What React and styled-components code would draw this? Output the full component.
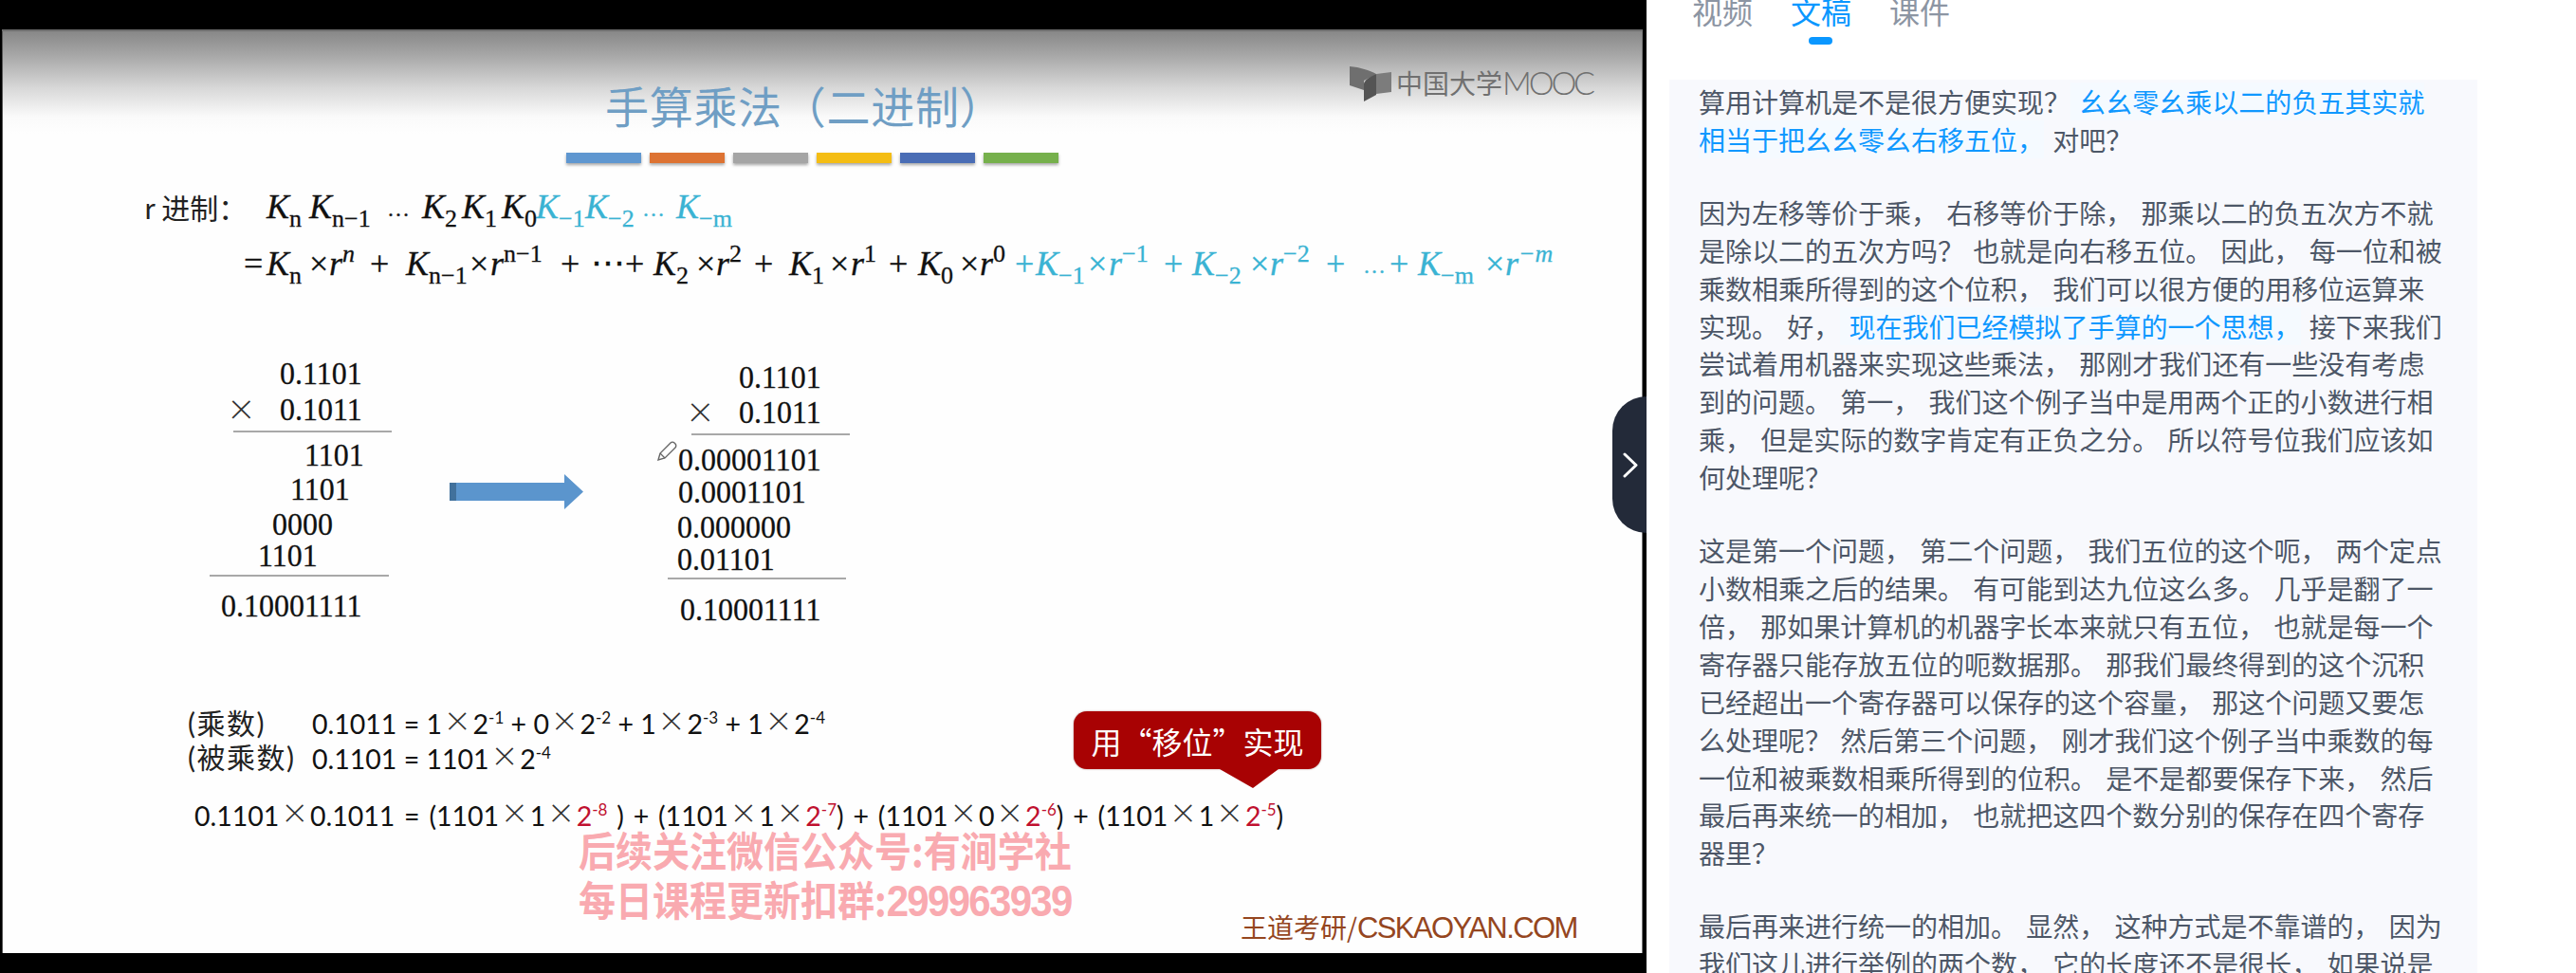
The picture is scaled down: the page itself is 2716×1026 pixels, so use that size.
import React from 'react';
import styled, { createGlobalStyle } from 'styled-components';

const Global = createGlobalStyle`
  html, body { margin: 0; padding: 0; background: #fff; }
  #root { width: 2716px; height: 1026px; overflow: hidden; }
`;

const SANS = `"Noto Sans CJK SC", "Liberation Sans", sans-serif`;

const Page = styled.div`
  display: flex;
  width: 2716px;
  height: 1026px;
  overflow: hidden;
  background: #fff;
`;

const VideoPane = styled.div`
  position: relative;
  flex: 0 0 1736px;
  height: 1026px;
  box-sizing: border-box;
  padding: 31px 4px 21px 2px;
  background: #000;
`;

const Slide = styled.div`
  position: relative;
  width: 100%;
  height: 100%;
  overflow: hidden;
  background: linear-gradient(#858585 0, #a8a8a8 28px, #d8d8d8 62px, #fafafa 92px, #fefefe 110px);
  box-shadow: inset 0 2px 0 #6e6e6e, inset 1px 0 0 #555, inset -1px 0 0 #777;
`;

const placed = (p) => `left:${p.$x - 2}px; top:${p.$y - 31}px;`;

const Title = styled.div`
  position: absolute;
  ${placed}
  font: 46px/50px ${SANS};
  letter-spacing: 0.7px;
  color: #6f9ec4;
  white-space: nowrap;
`;

const ColorBars = styled.div`
  position: absolute;
  ${placed}
  display: flex;
  gap: 9px;
`;

const ColorBar = styled.div`
  width: 79px;
  height: 11px;
  background: ${(p) => p.$c};
  box-shadow: 0 2px 3px rgba(0, 0, 0, 0.35);
`;

const LogoMark = styled.div`
  position: absolute;
  ${placed}
  display: flex;
  align-items: center;
  color: #707070;
  font: 28px/40px ${SANS};
  white-space: nowrap;
`;

const LogoLatin = styled.span`
  font: 300 34px/40px "Lato", "Liberation Sans", sans-serif;
  letter-spacing: -3.2px;
`;

const RadixLabel = styled.div`
  position: absolute;
  ${placed}
  font: 30px/40px ${SANS};
  color: #222;
  white-space: nowrap;
`;

const FormulaRow = styled.div`
  position: absolute;
  ${placed}
  display: flex;
  height: 50px;
  align-items: center;
  font: 36px/50px "Liberation Serif", serif;
  color: ${(p) => p.$c || '#111'};
  white-space: nowrap;
  -webkit-text-stroke: 0.3px currentColor;
`;

const Term = styled.span`
  flex: 0 0 ${(p) => p.$w}px;
  width: ${(p) => p.$w}px;
  color: ${(p) => p.$c || 'inherit'};
`;

const Var = styled.i`
  font-style: italic;
`;

const MathSub = styled.span`
  font-size: 26px;
  line-height: 0;
  position: relative;
  top: 9px;
  font-style: ${(p) => (p.$it ? 'italic' : 'normal')};
`;

const MathSup = styled.span`
  font-size: 26px;
  line-height: 0;
  position: relative;
  top: -14px;
  font-style: ${(p) => (p.$it ? 'italic' : 'normal')};
`;

const Dots = styled.span`
  font-size: 24px;
  letter-spacing: -1px;
`;

const Digits = styled.div`
  position: absolute;
  ${placed}
  font: 32px/40px "Liberation Serif", serif;
  color: #111;
  white-space: nowrap;
  transform-origin: left center;
  transform: scaleY(1.08);
  -webkit-text-stroke: 0.25px currentColor;
`;

const Cross = styled.div`
  position: absolute;
  ${placed}
  font: 300 46px/40px "Lato", "Liberation Sans", sans-serif;
  color: #333;
`;

const Rule = styled.div`
  position: absolute;
  ${placed}
  width: ${(p) => p.$w}px;
  height: 2px;
  background: #a8a8a8;
`;

const Drawing = styled.svg`
  position: absolute;
  ${placed}
  display: block;
`;

const EqLabel = styled.div`
  position: absolute;
  ${placed}
  font: 30px/40px "Lato", ${SANS};
  color: #222;
  white-space: nowrap;
  letter-spacing: 1.5px;
`;

const Equation = styled.div`
  position: absolute;
  ${placed}
  font: 28.5px/40px "Lato", sans-serif;
  font-variant-numeric: tabular-nums;
  word-spacing: ${(p) => p.$ws || 0}px;
  color: #111;
  white-space: nowrap;
`;

const Times = styled.span`
  font: 300 44px/0 "Lato", "Liberation Sans", sans-serif;
  position: relative;
  top: 1px;
  margin: 0 3.5px;
  color: #333;
`;

const Pow = styled.span`
  font-size: 17px;
  line-height: 0;
  position: relative;
  top: -11px;
`;

const Red = styled.span`
  color: #c0102f;
`;

const Callout = styled.div`
  position: absolute;
  ${placed}
  width: 261px;
  height: 61px;
  display: flex;
  align-items: center;
  justify-content: center;
  border-radius: 14px;
  background: #a80203;
  box-shadow: 0 0 2px rgba(120, 60, 60, 0.6);
  color: #fff;
  font: 32px/40px ${SANS};
  white-space: nowrap;
  &::after {
    content: '';
    position: absolute;
    left: 154px;
    top: 61px;
    border-left: 35px solid transparent;
    border-right: 27px solid transparent;
    border-top: 20px solid #a80203;
  }
`;

const Watermark = styled.div`
  position: absolute;
  ${placed}
  display: flex;
  flex-direction: column;
  gap: 4px;
  color: #f9aab0;
  font-family: "Noto Sans CJK SC", "Liberation Sans", sans-serif;
  font-weight: 700;
  white-space: nowrap;
`;

const WatermarkLine = styled.div`
  font-size: 39px;
  line-height: 48px;
  height: 48px;
  transform-origin: left center;
  transform: scaleY(1.12);
`;

const WatermarkDigits = styled.span`
  font: 700 42px/48px "Liberation Sans", sans-serif;
  letter-spacing: -1.7px;
`;

const Credit = styled.div`
  position: absolute;
  ${placed}
  font: 28px/40px ${SANS};
  color: #95461f;
  white-space: nowrap;
`;

const CreditLatin = styled.span`
  font: 31px/40px "Liberation Sans", sans-serif;
  letter-spacing: -1.6px;
`;

const CollapseHandle = styled.button`
  position: absolute;
  left: 1700px;
  top: 418px;
  width: 36px;
  height: 144px;
  padding: 0 0 0 11px;
  border: 0;
  border-radius: 36px 0 0 36px;
  background: #232a39;
  display: flex;
  align-items: center;
  color: #fff;
`;

const Sidebar = styled.aside`
  flex: 1;
  min-width: 0;
  display: flex;
  flex-direction: column;
  margin-top: -5px;
  padding: 0 104px 0 24px;
`;

const Tabs = styled.nav`
  display: flex;
  gap: 40px;
  padding-left: 24px;
  height: 52px;
  flex: none;
`;

const Tab = styled.div`
  position: relative;
  width: 64px;
  font: 32px/32px ${SANS};
  color: ${(p) => (p.$active ? '#0a97ff' : '#8c95a3')};
  ${(p) => p.$active && `
    &::after {
      content: '';
      position: absolute;
      left: 19px;
      top: 44px;
      width: 25px;
      height: 8px;
      border-radius: 4px;
      background: #0a97ff;
    }
  `}
`;

const TranscriptPanel = styled.section`
  margin-top: 37px;
  flex: 1;
  box-sizing: border-box;
  padding: 4px 33px 0 31px;
  background: #f8f9fd;
`;

const Paragraph = styled.p`
  margin: 0 0 37px;
  font: 28px/39.9px ${SANS};
  color: #4d5767;
  word-spacing: 3px;
`;

const Mark = styled.span`
  color: #0f98ff;
  background: #f5faff;
`;

const K = ({ s, it }) => (
  <>
    <Var>K</Var>
    <MathSub $it={it}>{s}</MathSub>
  </>
);

const R = ({ s, it }) => (
  <>
    <Var>r</Var>
    <MathSup $it={it}>{s}</MathSup>
  </>
);

const T = () => <Times>×</Times>;

const CYAN = '#3ab3d3';

const row1 = [
  [281, <K s="n" />],
  [326, <K s="n−1" />],
  [408, <Dots>…</Dots>],
  [445, <K s="2" />],
  [487, <K s="1" />],
  [529, <K s="0" />],
  [565, <K s="−1" />, CYAN],
  [617, <K s="−2" />, CYAN],
  [677, <Dots>…</Dots>, CYAN],
  [713, <K s="−m" />, CYAN],
  [790],
];

const row2 = [
  [257, '='],
  [281, <K s="n" />],
  [326, '×'],
  [347, <R s="n" it />],
  [390, '+'],
  [428, <K s="n−1" />],
  [495, '×'],
  [517, <R s="n−1" />],
  [591, '+'],
  [623, '⋯'],
  [659, '+'],
  [689, <K s="2" />],
  [734, '×'],
  [755, <R s="2" />],
  [795, '+'],
  [832, <K s="1" />],
  [875, '×'],
  [897, <R s="1" />],
  [937, '+'],
  [968, <K s="0" />],
  [1012, '×'],
  [1033, <R s="0" />],
  [1070, '+', CYAN],
  [1092, <K s="−1" />, CYAN],
  [1147, '×', CYAN],
  [1169, <R s="−1" />, CYAN],
  [1227, '+', CYAN],
  [1257, <K s="−2" />, CYAN],
  [1318, '×', CYAN],
  [1339, <R s="−2" />, CYAN],
  [1398, '+', CYAN],
  [1437, <Dots>…</Dots>, CYAN],
  [1465, '+', CYAN],
  [1495, <K s="−m" />, CYAN],
  [1566, '×', CYAN],
  [1587, <R s="−m" it />, CYAN],
  [1660],
];

const Formula = ({ y, items }) => (
  <FormulaRow $x={items[0][0]} $y={y}>
    {items.slice(0, -1).map(([x, node, c], i) => (
      <Term key={i} $w={items[i + 1][0] - x} $c={c}>
        {node}
      </Term>
    ))}
  </FormulaRow>
);

const bars = ['#5f97d0', '#dd7333', '#a5a5a5', '#f4bd14', '#4a6db5', '#76b04c'];

const digits = [
  [295, 373, '0.1101'],
  [295, 411, '0.1011'],
  [321, 459, '1101'],
  [306, 495, '1101'],
  [287, 532, '0000'],
  [272, 565, '1101'],
  [233, 618, '0.10001111'],
  [779, 377, '0.1101'],
  [779, 414, '0.1011'],
  [715, 464, '0.00001101'],
  [715, 498, '0.0001101'],
  [714, 535, '0.000000'],
  [714, 569, '0.01101'],
  [717, 622, '0.10001111'],
];

export default function App() {
  return (
    <Page>
      <Global />
      <VideoPane>
        <Slide>
          <Title $x={638} $y={85}>手算乘法（二进制）</Title>
          <ColorBars $x={597} $y={161}>
            {bars.map((c) => (
              <ColorBar key={c} $c={c} />
            ))}
          </ColorBars>
          <Drawing $x={1420} $y={68} width="52" height="40" viewBox="0 0 52 40">
            <path d="M3 2C14 3 24 6 31 10L18 17V27L3 22Z" fill="#6f6f6f" />
            <path d="M18 20C20 15 26 12 31 10V32L18 39Z" fill="#545454" />
            <path d="M31 10L47 8V29L31 31Z" fill="#7c7c7c" />
          </Drawing>
          <LogoMark $x={1472} $y={67}>
            中国大学<LogoLatin>MOOC</LogoLatin>
          </LogoMark>

          <RadixLabel $x={152} $y={198}>r 进制：</RadixLabel>
          <Formula y={193} items={row1} />
          <Formula y={253} items={row2} />

          {digits.map(([x, y, t]) => (
            <Digits key={`${x}-${y}`} $x={x} $y={y}>{t}</Digits>
          ))}
          <Cross $x={241} $y={410}>×</Cross>
          <Cross $x={725} $y={413}>×</Cross>
          <Rule $x={246} $y={454} $w={167} />
          <Rule $x={221} $y={606} $w={189} />
          <Rule $x={729} $y={457} $w={167} />
          <Rule $x={704} $y={609} $w={188} />

          <Drawing $x={474} $y={500} width="141" height="37" viewBox="0 0 141 37">
            <path d="M0 9H121V0L141 18.5L121 37V28H0Z" fill="#5b95cd" />
            <rect x="0" y="9" width="7" height="19" fill="#41719c" />
          </Drawing>
          <Drawing $x={692} $y={465} width="22" height="22" viewBox="0 0 22 22">
            <path d="M2 20L4 13L15 2C16 1 18 1 19 2L20 3C21 4 21 6 20 7L9 18Z" fill="#fff" stroke="#666" strokeWidth="1.4" />
            <path d="M4 13L9 18" stroke="#666" strokeWidth="1.2" />
          </Drawing>

          <EqLabel $x={198} $y={742}>(乘数)</EqLabel>
          <EqLabel $x={198} $y={778}>(被乘数)</EqLabel>
          <Equation $x={329} $y={743}>
            0.1011 = 1<T />2<Pow>-1</Pow> + 0<T />2<Pow>-2</Pow> + 1<T />2<Pow>-3</Pow> + 1<T />2<Pow>-4</Pow>
          </Equation>
          <Equation $x={329} $y={780}>
            0.1101 = 1101<T />2<Pow>-4</Pow>
          </Equation>
          <Equation $x={205} $y={840} $ws={2.5}>
            0.1101<T />0.1011 = (1101<T />1<T /><Red>2<Pow>-8</Pow></Red> ) + (1101<T />1<T /><Red>2<Pow>-7</Pow></Red>) + (1101<T />0<T /><Red>2<Pow>-6</Pow></Red>) + (1101<T />1<T /><Red>2<Pow>-5</Pow></Red>)
          </Equation>

          <Callout $x={1132} $y={750}>用“移位”实现</Callout>

          <Watermark $x={610} $y={871}>
            <WatermarkLine>后续关注微信公众号:有涧学社</WatermarkLine>
            <WatermarkLine>每日课程更新扣群:<WatermarkDigits>299963939</WatermarkDigits></WatermarkLine>
          </Watermark>

          <Credit $x={1308} $y={957}>
            王道考研/<CreditLatin>CSKAOYAN.COM</CreditLatin>
          </Credit>
        </Slide>
        <CollapseHandle aria-label="收起">
          <svg width="16" height="27" viewBox="0 0 16 27" fill="none" stroke="#fff" strokeWidth="3" strokeLinecap="round" strokeLinejoin="round">
            <path d="M2 2L14 13.5L2 25" />
          </svg>
        </CollapseHandle>
      </VideoPane>
      <Sidebar>
        <Tabs>
          <Tab>视频</Tab>
          <Tab $active>文稿</Tab>
          <Tab>课件</Tab>
        </Tabs>
        <TranscriptPanel>
          <Paragraph>
            算用计算机是不是很方便实现？<Mark> 幺幺零幺乘以二的负五其实就相当于把幺幺零幺右移五位，</Mark> 对吧？
          </Paragraph>
          <Paragraph>
            因为左移等价于乘， 右移等价于除， 那乘以二的负五次方不就是除以二的五次方吗？ 也就是向右移五位。 因此， 每一位和被乘数相乘所得到的这个位积， 我们可以很方便的用移位运算来实现。 好，<Mark> 现在我们已经模拟了手算的一个思想，</Mark> 接下来我们尝试着用机器来实现这些乘法， 那刚才我们还有一些没有考虑到的问题。 第一， 我们这个例子当中是用两个正的小数进行相乘， 但是实际的数字肯定有正负之分。 所以符号位我们应该如何处理呢？
          </Paragraph>
          <Paragraph>
            这是第一个问题， 第二个问题， 我们五位的这个呃， 两个定点小数相乘之后的结果。 有可能到达九位这么多。 几乎是翻了一倍， 那如果计算机的机器字长本来就只有五位， 也就是每一个寄存器只能存放五位的呃数据那。 那我们最终得到的这个沉积已经超出一个寄存器可以保存的这个容量， 那这个问题又要怎么处理呢？ 然后第三个问题， 刚才我们这个例子当中乘数的每一位和被乘数相乘所得到的位积。 是不是都要保存下来， 然后最后再来统一的相加， 也就把这四个数分别的保存在四个寄存器里？
          </Paragraph>
          <Paragraph>
            最后再来进行统一的相加。 显然， 这种方式是不靠谱的， 因为我们这儿进行举例的两个数， 它的长度还不是很长， 如果说是
          </Paragraph>
        </TranscriptPanel>
      </Sidebar>
    </Page>
  );
}
